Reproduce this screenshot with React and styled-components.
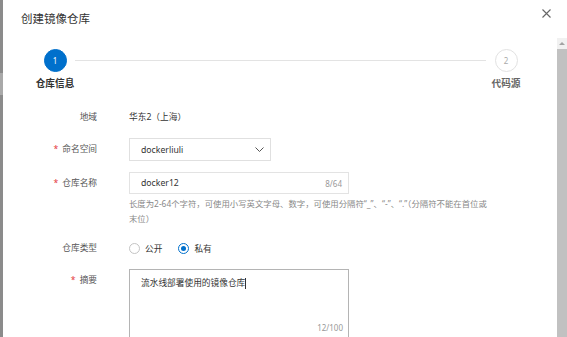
import React from 'react'
import styled, { createGlobalStyle } from 'styled-components'

const GlobalStyle = createGlobalStyle`
  html, body {
    margin: 0;
    padding: 0;
    background: #fff;
  }
  body {
    font-family: "Noto Sans", "Noto Sans CJK SC", sans-serif;
  }
`

const Page = styled.div`
  display: flex;
  width: 567px;
  height: 337px;
  overflow: hidden;
`

const Backdrop = styled.div`
  width: 3px;
  display: flex;
  flex-direction: column;
`

const BackdropPart = styled.div`
  height: ${p => (p.$h ? p.$h + 'px' : 'auto')};
  flex: ${p => (p.$h ? 'none' : 1)};
  background: ${p => p.$c};
`

const Modal = styled.div`
  flex: 1;
  display: flex;
  flex-direction: column;
  background: #fff;
  min-width: 0;
`

const Header = styled.div`
  height: 38px;
  flex: none;
  display: flex;
  justify-content: space-between;
  align-items: flex-start;
`

const Title = styled.div`
  padding: 11px 0 0 18px;
  font-size: 11.5px;
  line-height: 16px;
  color: #333;
`

const Close = styled.div`
  margin: 9px 16px 0 0;
  width: 9px;
  height: 9px;
  display: flex;
`

const Main = styled.div`
  flex: 1;
  display: flex;
  min-height: 0;
`

const Content = styled.div`
  flex: 1;
  overflow: hidden;
`

const Scrollbar = styled.div`
  width: 10px;
  flex: none;
  display: flex;
  flex-direction: column;
  background: #f1f1f1;
`

const ScrollArrow = styled.div`
  height: 11px;
  display: flex;
  align-items: center;
  justify-content: center;
  &::after {
    content: "";
    border-left: 3px solid transparent;
    border-right: 3px solid transparent;
    border-bottom: 3px solid #a3a3a3;
  }
`

const ScrollThumb = styled.div`
  flex: 1;
  background: #c1c1c1;
`

const Stepper = styled.div`
  display: flex;
  align-items: flex-start;
  padding: 11px 31px 0 32px;
`

const Step = styled.div`
  width: 40px;
  display: flex;
  flex-direction: column;
  align-items: center;
`

const StepCircle = styled.div`
  width: 23px;
  height: 23px;
  box-sizing: border-box;
  border-radius: 50%;
  display: flex;
  align-items: center;
  justify-content: center;
  font-size: 8px;
  background: ${p => (p.$active ? '#0070cc' : '#fff')};
  color: ${p => (p.$active ? '#fff' : '#aaa')};
  border: 1px solid ${p => (p.$active ? '#0070cc' : '#e2e2e2')};
`

const StepLabel = styled.div`
  margin-top: 5px;
  font-size: 9.7px;
  line-height: 14px;
  font-weight: 700;
  white-space: nowrap;
  color: ${p => (p.$active ? '#333' : '#666')};
`

const StepLine = styled.div`
  flex: 1;
  height: 1px;
  margin-top: 11px;
  background: #e3e3e3;
`

const Form = styled.div`
  display: flex;
  flex-direction: column;
  padding-top: 15px;
  font-size: 8.7px;
`

const FormRow = styled.div`
  display: grid;
  grid-template-columns: 94px 1fr;
  column-gap: 32px;
  margin-top: ${p => p.$mt || 0}px;
`

const Label = styled.div`
  text-align: right;
  line-height: ${p => p.$h || 22}px;
  color: #555;
  white-space: nowrap;
`

const Required = styled.span`
  color: #e4393c;
  margin-right: 4px;
`

const Value = styled.div`
  line-height: 22px;
  color: #333;
`

const Select = styled.div`
  width: 142px;
  height: 23px;
  box-sizing: border-box;
  border: 1px solid #e0e0e0;
  display: flex;
  align-items: center;
  justify-content: space-between;
  padding: 0 6px 0 11px;
  color: #333;
`

const Input = styled.div`
  width: 220px;
  height: 22px;
  box-sizing: border-box;
  border: 1px solid #e3e3e3;
  display: flex;
  align-items: center;
  justify-content: space-between;
  padding: 0 6px 0 11px;
  color: #333;
`

const Counter = styled.span`
  color: #999;
  font-size: 8px;
`

const Help = styled.div`
  margin-top: 3px;
  font-size: 8.4px;
  line-height: 14.5px;
  color: #888;
  white-space: nowrap;
`

const RadioGroup = styled.div`
  display: flex;
  align-items: center;
  height: 22px;
  gap: 16px;
`

const RadioItem = styled.label`
  display: flex;
  align-items: center;
  gap: 5px;
  color: #333;
`

const RadioCircle = styled.span`
  width: 11px;
  height: 11px;
  box-sizing: border-box;
  border-radius: 50%;
  border: 1px solid ${p => (p.$checked ? '#0070cc' : '#c4c4c4')};
  display: flex;
  align-items: center;
  justify-content: center;
  &::after {
    content: "";
    width: 5px;
    height: 5px;
    border-radius: 50%;
    background: ${p => (p.$checked ? '#0070cc' : 'transparent')};
  }
`

const TextArea = styled.div`
  position: relative;
  width: 220px;
  height: 72px;
  box-sizing: border-box;
  border: 1px solid #b4b4b4;
  padding: 7px 11px;
  line-height: 12px;
  color: #333;
`

const Caret = styled.span`
  display: inline-block;
  width: 1px;
  height: 11px;
  background: #333;
  vertical-align: middle;
`

const AreaCounter = styled.span`
  position: absolute;
  right: 5px;
  bottom: 6px;
  line-height: 12px;
  color: #999;
  font-size: 8px;
`

const CloseIcon = () => (
  <svg width="9" height="9" viewBox="0 0 9 9">
    <path d="M0.5 0.5 L8.5 8.5 M8.5 0.5 L0.5 8.5" stroke="#666" strokeWidth="1.1" fill="none" />
  </svg>
)

const Chevron = () => (
  <svg width="9" height="5" viewBox="0 0 9 5">
    <path d="M0.5 0.5 L4.5 4.5 L8.5 0.5" stroke="#555" strokeWidth="1" fill="none" />
  </svg>
)

const App = () => {
  return (
    <Page>
      <GlobalStyle />
      <Backdrop>
        <BackdropPart $h={73} $c="#8b8b8b" />
        <BackdropPart $h={22} $c="#a9a9a9" />
        <BackdropPart $c="#8b8b8b" />
      </Backdrop>
      <Modal>
        <Header>
          <Title>创建镜像仓库</Title>
          <Close><CloseIcon /></Close>
        </Header>
        <Main>
          <Content>
            <Stepper>
              <Step>
                <StepCircle $active>1</StepCircle>
                <StepLabel $active>仓库信息</StepLabel>
              </Step>
              <StepLine />
              <Step>
                <StepCircle>2</StepCircle>
                <StepLabel>代码源</StepLabel>
              </Step>
            </Stepper>
            <Form>
              <FormRow>
                <Label>地域</Label>
                <Value>华东2（上海）</Value>
              </FormRow>
              <FormRow $mt={10}>
                <Label $h={23}><Required>*</Required>命名空间</Label>
                <div>
                  <Select>
                    <span>dockerliuli</span>
                    <Chevron />
                  </Select>
                </div>
              </FormRow>
              <FormRow $mt={11}>
                <Label><Required>*</Required>仓库名称</Label>
                <div>
                  <Input>
                    <span>docker12</span>
                    <Counter>8/64</Counter>
                  </Input>
                  <Help>
                    长度为2-64个字符，可使用小写英文字母、数字，可使用分隔符“_”、“-”、“.”（分隔符不能在首位或
                    <br />
                    末位）
                  </Help>
                </div>
              </FormRow>
              <FormRow $mt={11}>
                <Label>仓库类型</Label>
                <RadioGroup>
                  <RadioItem><RadioCircle />公开</RadioItem>
                  <RadioItem><RadioCircle $checked />私有</RadioItem>
                </RadioGroup>
              </FormRow>
              <FormRow $mt={10}>
                <Label><Required>*</Required>摘要</Label>
                <div>
                  <TextArea>
                    流水线部署使用的镜像仓库<Caret />
                    <AreaCounter>12/100</AreaCounter>
                  </TextArea>
                </div>
              </FormRow>
            </Form>
          </Content>
          <Scrollbar>
            <ScrollArrow />
            <ScrollThumb />
          </Scrollbar>
        </Main>
      </Modal>
    </Page>
  )
}

export default App
